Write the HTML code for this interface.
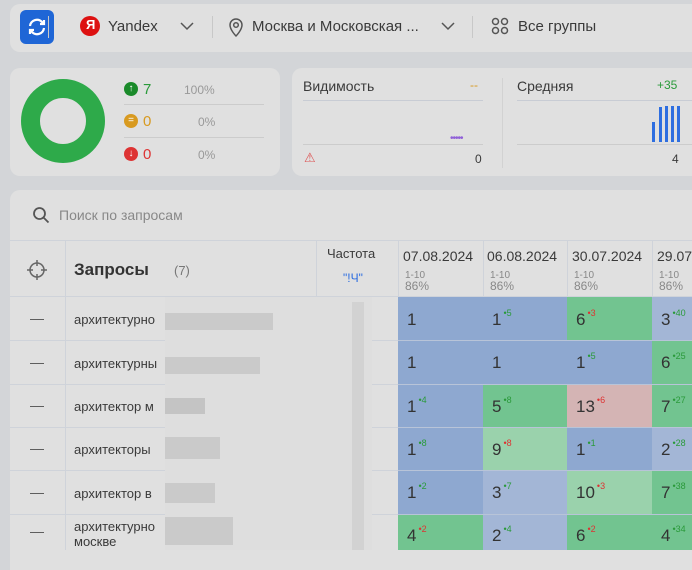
<!DOCTYPE html>
<html><head><meta charset="utf-8"><style>
*{margin:0;padding:0;box-sizing:border-box}
body{width:692px;height:550px;overflow:hidden;background:#d3d5d8;font-family:"Liberation Sans","DejaVu Sans",sans-serif;color:#3a3a3a;position:relative}
.a{position:absolute}
.card{position:absolute;background:#e0e0e0;border-radius:10px}
.t{position:absolute;white-space:nowrap}
.cell{position:absolute;font-size:17px;color:#333}
.cell sup{font-size:9px;position:relative;top:-2px;margin-left:2px}
.g{color:#2a9a3a}.r{color:#d33}
</style></head><body>
<div class="card" style="left:10px;top:4px;width:700px;height:48px"></div>
<div class="a" style="left:20px;top:10px;width:34px;height:34px;background:#1f66d6;border-radius:6px"></div>
<svg class="a" style="left:26px;top:16px" width="22" height="22" viewBox="0 0 22 22" fill="none" stroke="#fff" stroke-width="2.2"><path d="M4 10a7 7 0 0 1 12-4l2 2M18 12a7 7 0 0 1-12 4l-2-2"/><path d="M18 4v4h-4M4 18v-4h4"/></svg>
<div class="a" style="left:48px;top:16px;width:1px;height:22px;background:#c8c8c8"></div>
<div class="a" style="left:80px;top:16px;width:20px;height:20px;border-radius:50%;background:#d11"></div><div class="t" style="left:86px;top:17px;color:#fff;font-size:13px;font-weight:bold">Я</div>
<div class="t" style="left:108px;top:18px;font-size:15px">Yandex</div>
<svg class="a" style="left:179px;top:21px" width="16" height="10"><path d="M2 2l6 6 6-6" stroke="#555" fill="none" stroke-width="1.5"/></svg>
<div class="a" style="left:212px;top:16px;width:1px;height:22px;background:#c8c8c8"></div>
<svg class="a" style="left:228px;top:16px" width="16" height="22"><path d="M8 20s6-6 6-11a6 6 0 0 0-12 0c0 5 6 11 6 11z" stroke="#555" fill="none" stroke-width="1.5"/><circle cx="8" cy="9" r="2.3" stroke="#555" fill="none" stroke-width="1.5"/></svg>
<div class="t" style="left:252px;top:18px;font-size:15px">Москва и Московская ...</div>
<svg class="a" style="left:440px;top:21px" width="16" height="10"><path d="M2 2l6 6 6-6" stroke="#555" fill="none" stroke-width="1.5"/></svg>
<div class="a" style="left:472px;top:16px;width:1px;height:22px;background:#c8c8c8"></div>
<svg class="a" style="left:491px;top:17px" width="18" height="18" fill="none" stroke="#555" stroke-width="1.5"><circle cx="4.5" cy="4.5" r="3"/><circle cx="13.5" cy="4.5" r="3"/><circle cx="4.5" cy="13.5" r="3"/><circle cx="13.5" cy="13.5" r="3"/></svg>
<div class="t" style="left:518px;top:18px;font-size:15px">Все группы</div>

<div class="card" style="left:10px;top:68px;width:270px;height:108px"></div>
<div class="a" style="left:21px;top:79px;width:84px;height:84px;border-radius:50%;border:19px solid #2eaa4a"></div>
<div class="a" style="left:124px;top:82px;width:14px;height:14px;border-radius:50%;background:#1a8a2a;color:#fff;font-size:10px;text-align:center;line-height:14px">↑</div>
<div class="t g" style="left:143px;top:81px;font-size:15px">7</div><div class="t" style="left:184px;top:83px;font-size:12px;color:#999">100%</div>
<div class="a" style="left:124px;top:104px;width:140px;height:1px;background:#ccc"></div>
<div class="a" style="left:124px;top:114px;width:14px;height:14px;border-radius:50%;background:#d89a20;color:#fff;font-size:10px;text-align:center;line-height:14px">=</div>
<div class="t" style="left:143px;top:113px;font-size:15px;color:#d89a20">0</div><div class="t" style="left:198px;top:115px;font-size:12px;color:#999">0%</div>
<div class="a" style="left:124px;top:137px;width:140px;height:1px;background:#ccc"></div>
<div class="a" style="left:124px;top:147px;width:14px;height:14px;border-radius:50%;background:#d33;color:#fff;font-size:10px;text-align:center;line-height:14px">↓</div>
<div class="t r" style="left:143px;top:146px;font-size:15px">0</div><div class="t" style="left:198px;top:148px;font-size:12px;color:#999">0%</div>

<div class="card" style="left:292px;top:68px;width:420px;height:108px"></div>
<div class="t" style="left:303px;top:78px;font-size:14px">Видимость</div><div class="t" style="left:470px;top:78px;font-size:12px;color:#d89a20">--</div>
<div class="a" style="left:303px;top:100px;width:180px;height:1px;background:#c8ccd4"></div>
<div class="t" style="left:450px;top:133px;font-size:10px;color:#9060d8;letter-spacing:-1px">•••••</div>
<div class="a" style="left:303px;top:144px;width:180px;height:1px;background:#ccc"></div>
<div class="t" style="left:304px;top:150px;font-size:13px;color:#d55">⚠</div><div class="t" style="left:475px;top:152px;font-size:12px">0</div>
<div class="a" style="left:502px;top:78px;width:1px;height:90px;background:#d2d2d2"></div>
<div class="t" style="left:517px;top:78px;font-size:14px">Средняя</div><div class="t g" style="left:657px;top:78px;font-size:12px">+35</div>
<div class="a" style="left:517px;top:100px;width:175px;height:1px;background:#c8ccd4"></div>
<div class="a" style="left:652px;top:122px;width:3px;height:20px;background:#2e6ee0"></div>
<div class="a" style="left:659px;top:107px;width:3px;height:35px;background:#2e6ee0"></div>
<div class="a" style="left:665px;top:106px;width:3px;height:36px;background:#2e6ee0"></div>
<div class="a" style="left:671px;top:106px;width:3px;height:36px;background:#2e6ee0"></div>
<div class="a" style="left:677px;top:106px;width:3px;height:36px;background:#2e6ee0"></div>
<div class="a" style="left:517px;top:144px;width:175px;height:1px;background:#ccc"></div>
<div class="t" style="left:672px;top:152px;font-size:12px">4</div>

<div class="card" style="left:10px;top:190px;width:700px;height:380px;border-radius:10px 0 0 0"></div>
<svg class="a" style="left:32px;top:206px" width="18" height="18" fill="none" stroke="#555" stroke-width="1.8"><circle cx="7.5" cy="7.5" r="5.5"/><path d="M11.5 11.5l5 5"/></svg>
<div class="t" style="left:59px;top:207px;font-size:14px;color:#888">Поиск по запросам</div>
<div class="a" style="left:10px;top:240px;width:682px;height:1px;background:#cfd3da"></div>
<div class="a" style="left:65px;top:240px;width:1px;height:310px;background:#cfd3da"></div>
<div class="a" style="left:316px;top:240px;width:1px;height:310px;background:#cfd3da"></div>
<div class="a" style="left:398px;top:240px;width:1px;height:56px;background:#cfd3da"></div>
<div class="a" style="left:483px;top:240px;width:1px;height:56px;background:#cfd3da"></div>
<div class="a" style="left:567px;top:240px;width:1px;height:56px;background:#cfd3da"></div>
<div class="a" style="left:652px;top:240px;width:1px;height:56px;background:#cfd3da"></div>
<svg class="a" style="left:26px;top:259px" width="22" height="22" fill="none" stroke="#666" stroke-width="1.5"><circle cx="11" cy="11" r="7"/><path d="M11 1v6M11 15v6M1 11h6M15 11h6"/></svg>
<div class="t" style="left:74px;top:260px;font-size:17px;font-weight:bold;color:#333">Запросы</div>
<div class="t" style="left:174px;top:263px;font-size:13px;color:#777">(7)</div>
<div class="t" style="left:327px;top:246px;font-size:13px">Частота</div>
<div class="t" style="left:343px;top:271px;font-size:12px;color:#2e6ee0">"!Ч"</div>
<div class="t" style="left:403px;top:248px;font-size:14px">07.08.2024</div>
<div class="t" style="left:487px;top:248px;font-size:14px">06.08.2024</div>
<div class="t" style="left:572px;top:248px;font-size:14px">30.07.2024</div>
<div class="t" style="left:657px;top:248px;font-size:14px">29.07</div>
<div class="t" style="left:405px;top:270px;font-size:10px;color:#888;line-height:11px">1-10<br><span style="font-size:12px">86%</span></div>
<div class="t" style="left:490px;top:270px;font-size:10px;color:#888;line-height:11px">1-10<br><span style="font-size:12px">86%</span></div>
<div class="t" style="left:574px;top:270px;font-size:10px;color:#888;line-height:11px">1-10<br><span style="font-size:12px">86%</span></div>
<div class="t" style="left:659px;top:270px;font-size:10px;color:#888;line-height:11px">1-10<br><span style="font-size:12px">86%</span></div>

<!-- rows -->
<div class="a" style="left:10px;top:296px;width:682px;height:1px;background:#cfd3da"></div>
<div class="a" style="left:10px;top:340px;width:388px;height:1px;background:#cfd3da"></div>
<div class="a" style="left:10px;top:384px;width:388px;height:1px;background:#cfd3da"></div>
<div class="a" style="left:10px;top:427px;width:388px;height:1px;background:#cfd3da"></div>
<div class="a" style="left:10px;top:470px;width:388px;height:1px;background:#cfd3da"></div>
<div class="a" style="left:10px;top:514px;width:388px;height:1px;background:#cfd3da"></div>

<div class="a" style="left:165px;top:297px;width:207px;height:253px;background:#dedede"></div>
<div class="a" style="left:165px;top:313px;width:108px;height:17px;background:#cacaca"></div>
<div class="a" style="left:165px;top:357px;width:95px;height:17px;background:#cacaca"></div>
<div class="a" style="left:165px;top:398px;width:40px;height:16px;background:#c4c4c4"></div>
<div class="a" style="left:165px;top:437px;width:55px;height:22px;background:#cacaca"></div>
<div class="a" style="left:165px;top:483px;width:50px;height:20px;background:#cacaca"></div>
<div class="a" style="left:165px;top:517px;width:68px;height:28px;background:#cacaca"></div>
<div class="a" style="left:352px;top:302px;width:12px;height:248px;background:#d2d2d2"></div>

<div class="t" style="left:30px;top:310px;font-size:14px;color:#555">—</div><div class="t" style="left:74px;top:312px;font-size:13px">архитектурно</div>
<div class="t" style="left:30px;top:354px;font-size:14px;color:#555">—</div><div class="t" style="left:74px;top:356px;font-size:13px">архитектурны</div>
<div class="t" style="left:30px;top:397px;font-size:14px;color:#555">—</div><div class="t" style="left:74px;top:399px;font-size:13px">архитектор м</div>
<div class="t" style="left:30px;top:440px;font-size:14px;color:#555">—</div><div class="t" style="left:74px;top:442px;font-size:13px">архитекторы</div>
<div class="t" style="left:30px;top:484px;font-size:14px;color:#555">—</div><div class="t" style="left:74px;top:486px;font-size:13px">архитектор в</div>
<div class="t" style="left:30px;top:523px;font-size:14px;color:#555">—</div><div class="t" style="left:74px;top:519px;font-size:13px;line-height:15px">архитектурно<br>москве</div>

<!-- grid cells -->
<div class="a" style="left:398px;top:297px;width:85px;height:43px;background:#8ea8d0"></div>
<div class="a" style="left:483px;top:297px;width:84px;height:43px;background:#8ea8d0"></div>
<div class="a" style="left:567px;top:297px;width:85px;height:43px;background:#72c490"></div>
<div class="a" style="left:652px;top:297px;width:40px;height:43px;background:#a3b6d6"></div>
<div class="a" style="left:398px;top:340px;width:85px;height:44px;background:#8ea8d0"></div>
<div class="a" style="left:483px;top:340px;width:84px;height:44px;background:#8ea8d0"></div>
<div class="a" style="left:567px;top:340px;width:85px;height:44px;background:#8ea8d0"></div>
<div class="a" style="left:652px;top:340px;width:40px;height:44px;background:#72c490"></div>
<div class="a" style="left:398px;top:384px;width:85px;height:43px;background:#8ea8d0"></div>
<div class="a" style="left:483px;top:384px;width:84px;height:43px;background:#72c490"></div>
<div class="a" style="left:567px;top:384px;width:85px;height:43px;background:#d4b4b4"></div>
<div class="a" style="left:652px;top:384px;width:40px;height:43px;background:#72c490"></div>
<div class="a" style="left:398px;top:427px;width:85px;height:43px;background:#8ea8d0"></div>
<div class="a" style="left:483px;top:427px;width:84px;height:43px;background:#9ad2ac"></div>
<div class="a" style="left:567px;top:427px;width:85px;height:43px;background:#8ea8d0"></div>
<div class="a" style="left:652px;top:427px;width:40px;height:43px;background:#a3b6d6"></div>
<div class="a" style="left:398px;top:470px;width:85px;height:44px;background:#8ea8d0"></div>
<div class="a" style="left:483px;top:470px;width:84px;height:44px;background:#a3b6d6"></div>
<div class="a" style="left:567px;top:470px;width:85px;height:44px;background:#9ad2ac"></div>
<div class="a" style="left:652px;top:470px;width:40px;height:44px;background:#72c490"></div>
<div class="a" style="left:398px;top:514px;width:85px;height:36px;background:#72c490"></div>
<div class="a" style="left:483px;top:514px;width:84px;height:36px;background:#a3b6d6"></div>
<div class="a" style="left:567px;top:514px;width:85px;height:36px;background:#72c490"></div>
<div class="a" style="left:652px;top:514px;width:40px;height:36px;background:#72c490"></div>
<div class="a" style="left:398px;top:340px;width:294px;height:1px;background:#b8c4d8"></div>
<div class="a" style="left:398px;top:384px;width:294px;height:1px;background:#b8c4d8"></div>
<div class="a" style="left:398px;top:427px;width:294px;height:1px;background:#b8c4d8"></div>
<div class="a" style="left:398px;top:470px;width:294px;height:1px;background:#b8c4d8"></div>
<div class="a" style="left:398px;top:514px;width:294px;height:1px;background:#b8c4d8"></div>

<div class="cell" style="left:407px;top:310px">1</div>
<div class="cell" style="left:492px;top:310px">1<sup class="g">•5</sup></div>
<div class="cell" style="left:576px;top:310px">6<sup class="r">•3</sup></div>
<div class="cell" style="left:661px;top:310px">3<sup class="g">•40</sup></div>
<div class="cell" style="left:407px;top:353px">1</div>
<div class="cell" style="left:492px;top:353px">1</div>
<div class="cell" style="left:576px;top:353px">1<sup class="g">•5</sup></div>
<div class="cell" style="left:661px;top:353px">6<sup class="g">•25</sup></div>
<div class="cell" style="left:407px;top:397px">1<sup class="g">•4</sup></div>
<div class="cell" style="left:492px;top:397px">5<sup class="g">•8</sup></div>
<div class="cell" style="left:576px;top:397px">13<sup class="r">•6</sup></div>
<div class="cell" style="left:661px;top:397px">7<sup class="g">•27</sup></div>
<div class="cell" style="left:407px;top:440px">1<sup class="g">•8</sup></div>
<div class="cell" style="left:492px;top:440px">9<sup class="r">•8</sup></div>
<div class="cell" style="left:576px;top:440px">1<sup class="g">•1</sup></div>
<div class="cell" style="left:661px;top:440px">2<sup class="g">•28</sup></div>
<div class="cell" style="left:407px;top:483px">1<sup class="g">•2</sup></div>
<div class="cell" style="left:492px;top:483px">3<sup class="g">•7</sup></div>
<div class="cell" style="left:576px;top:483px">10<sup class="r">•3</sup></div>
<div class="cell" style="left:661px;top:483px">7<sup class="g">•38</sup></div>
<div class="cell" style="left:407px;top:526px">4<sup class="r">•2</sup></div>
<div class="cell" style="left:492px;top:526px">2<sup class="g">•4</sup></div>
<div class="cell" style="left:576px;top:526px">6<sup class="r">•2</sup></div>
<div class="cell" style="left:661px;top:526px">4<sup class="g">•34</sup></div>
</body></html>
